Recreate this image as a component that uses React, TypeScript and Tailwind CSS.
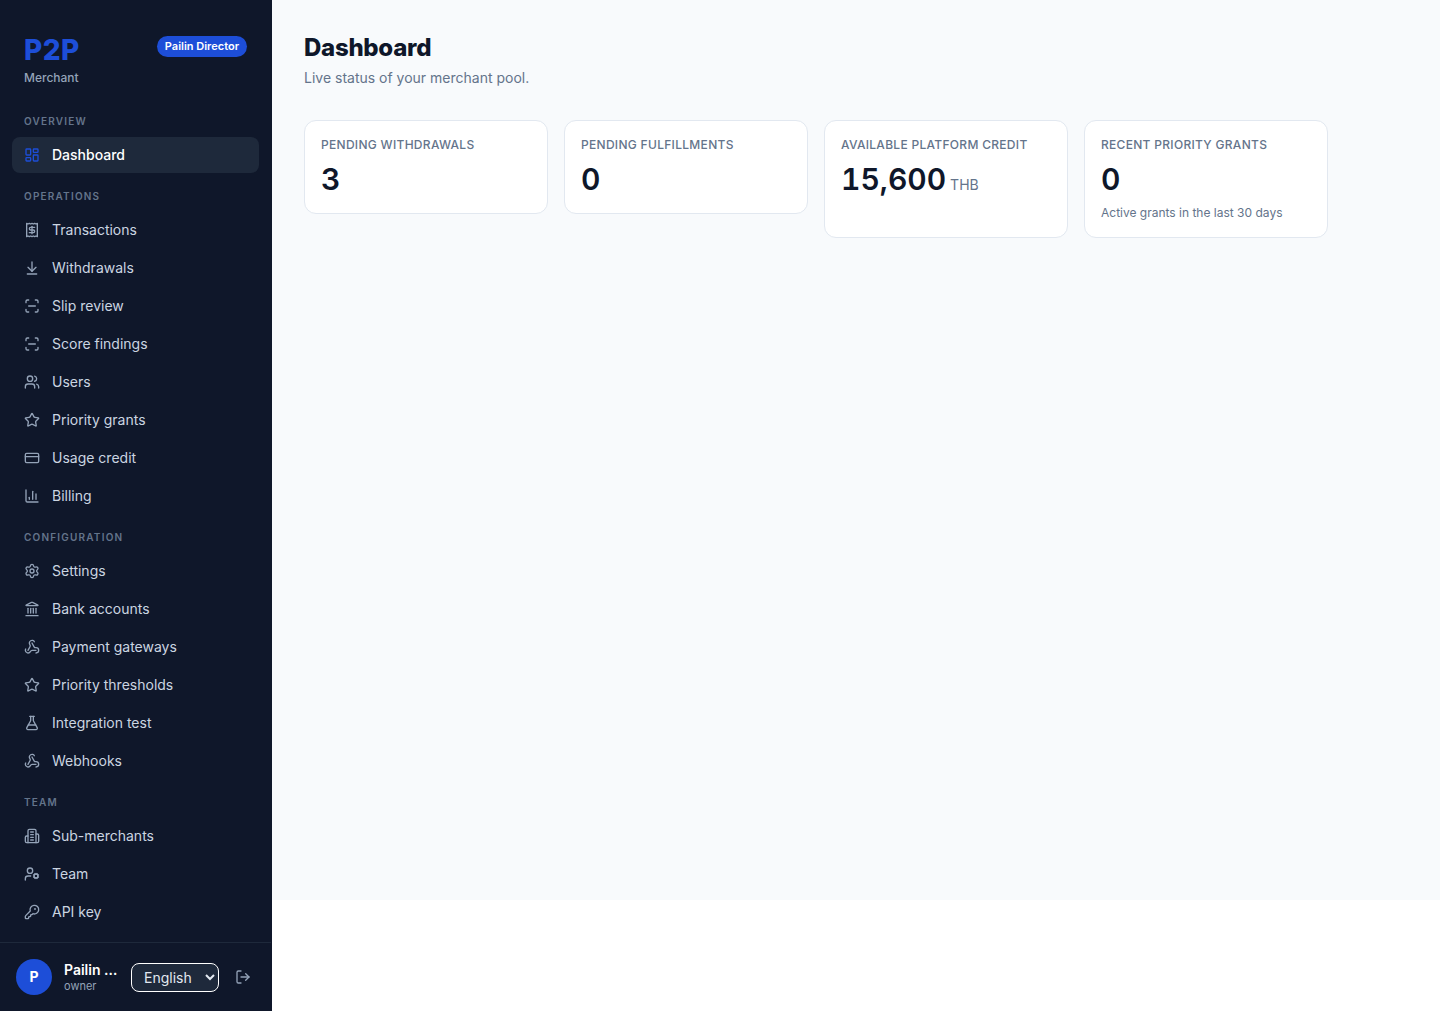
import type { ComponentType } from "react";
import {
  ArrowDownToLine,
  ChartColumn,
  CreditCard,
  FlaskConical,
  KeyRound,
  Landmark,
  LayoutDashboard,
  LogOut,
  ScanLine,
  Settings,
  Star,
  UserCog,
  Users,
  Webhook,
} from "lucide-react";

type IconProps = { size?: number; strokeWidth?: number; className?: string };
type NavItem = { label: string; icon: ComponentType<IconProps>; active?: boolean };

function ReceiptIcon({ size = 16, strokeWidth = 2, className }: IconProps) {
  return (
    <svg
      width={size}
      height={size}
      viewBox="0 0 24 24"
      fill="none"
      stroke="currentColor"
      strokeWidth={strokeWidth}
      strokeLinecap="round"
      strokeLinejoin="round"
      className={className}
    >
      <path d="M4 2v20l2-1 2 1 2-1 2 1 2-1 2 1 2-1 2 1V2l-2 1-2-1-2 1-2-1-2 1-2-1-2 1Z" />
      <path d="M16 8h-6a2 2 0 1 0 0 4h4a2 2 0 1 1 0 4H8" />
      <path d="M12 17.5v-11" />
    </svg>
  );
}

function BuildingIcon({ size = 16, strokeWidth = 2, className }: IconProps) {
  return (
    <svg
      width={size}
      height={size}
      viewBox="0 0 24 24"
      fill="none"
      stroke="currentColor"
      strokeWidth={strokeWidth}
      strokeLinecap="round"
      strokeLinejoin="round"
      className={className}
    >
      <path d="M6 22V4a2 2 0 0 1 2-2h8a2 2 0 0 1 2 2v18Z" />
      <path d="M6 12H4a2 2 0 0 0-2 2v6a2 2 0 0 0 2 2h2" />
      <path d="M18 9h2a2 2 0 0 1 2 2v9a2 2 0 0 1-2 2h-2" />
      <path d="M10 6h4M10 10h4M10 14h4M10 18h4" />
    </svg>
  );
}

const sections: { title: string; items: NavItem[] }[] = [
  {
    title: "Overview",
    items: [{ label: "Dashboard", icon: LayoutDashboard, active: true }],
  },
  {
    title: "Operations",
    items: [
      { label: "Transactions", icon: ReceiptIcon },
      { label: "Withdrawals", icon: ArrowDownToLine },
      { label: "Slip review", icon: ScanLine },
      { label: "Score findings", icon: ScanLine },
      { label: "Users", icon: Users },
      { label: "Priority grants", icon: Star },
      { label: "Usage credit", icon: CreditCard },
      { label: "Billing", icon: ChartColumn },
    ],
  },
  {
    title: "Configuration",
    items: [
      { label: "Settings", icon: Settings },
      { label: "Bank accounts", icon: Landmark },
      { label: "Payment gateways", icon: Webhook },
      { label: "Priority thresholds", icon: Star },
      { label: "Integration test", icon: FlaskConical },
      { label: "Webhooks", icon: Webhook },
    ],
  },
  {
    title: "Team",
    items: [
      { label: "Sub-merchants", icon: BuildingIcon },
      { label: "Team", icon: UserCog },
      { label: "API key", icon: KeyRound },
    ],
  },
];

const stats = [
  { label: "Pending withdrawals", value: "3" },
  { label: "Pending fulfillments", value: "0" },
  { label: "Available platform credit", value: "15,600", unit: "THB", hint: "" },
  { label: "Recent priority grants", value: "0", hint: "Active grants in the last 30 days" },
];

function Sidebar() {
  return (
    <aside className="flex h-[1011px] w-[272px] shrink-0 flex-col border-r border-[#0f172a] bg-[#0f172a]">
      <div className="flex items-start justify-between px-6 pt-8">
        <div>
          <div className="pt-px text-[28px] leading-[34px] font-extrabold tracking-[0.4px] text-[#1d4ed8]">P2P</div>
          <div className="mt-0.5 text-xs leading-[18px] font-medium text-[#94a3b8]">Merchant</div>
        </div>
        <span className="mt-1 rounded-full bg-[#1d4ed8] px-2 text-[11px] leading-[21px] font-semibold text-white">
          Pailin Director
        </span>
      </div>

      <nav className="flex flex-1 flex-col gap-4 px-3 pt-[27px]">
        {sections.map((s) => (
          <div key={s.title}>
            <h2 className="mb-2 px-3 text-[10px] leading-[15px] font-semibold tracking-[1.2px] text-[#64748b] uppercase">
              {s.title}
            </h2>
            <ul className="flex flex-col gap-0.5">
              {s.items.map(({ label, icon: Icon, active }) => (
                <li key={label}>
                  <a
                    className={`flex h-9 items-center gap-3 rounded-lg px-3 text-sm ${
                      active ? "bg-[#1e293b] font-medium text-white" : "font-normal text-[#cbd5e1]"
                    }`}
                  >
                    <Icon size={16} strokeWidth={2} className={active ? "text-[#1d4ed8]" : "text-[#94a3b8]"} />
                    {label}
                  </a>
                </li>
              ))}
            </ul>
          </div>
        ))}
      </nav>

      {/* Account */}
      <div className="flex items-center border-t border-[#1e293b] p-4">
        <div className="flex h-9 w-9 shrink-0 items-center justify-center rounded-full bg-[#1d4ed8] text-sm font-bold text-white">
          P
        </div>
        <div className="ml-3 w-[55px]">
          <div className="truncate text-sm leading-[18px] font-semibold text-white">Pailin Director</div>
          <div className="text-[11px] leading-[14px] text-[#94a3b8]">owner</div>
        </div>
        <select className="ml-3 h-[29px] w-[88px] rounded-lg border border-white bg-[#1e293b] px-2 font-['Inter',sans-serif] text-sm text-[#e2e8f0]">
          <option>English</option>
        </select>
        <button className="ml-4 text-[#94a3b8]">
          <LogOut size={16} strokeWidth={2} />
        </button>
      </div>
    </aside>
  );
}

export default function App() {
  return (
    <div className="flex h-[1011px] items-start overflow-hidden bg-white font-['Inter',sans-serif]">
      <Sidebar />
      <main className="h-[900px] flex-1 bg-[#f8fafc] p-8">
        <h1 className="text-2xl leading-8 font-extrabold tracking-[-0.28px] text-[#0f172a]">Dashboard</h1>
        <p className="mt-1 text-sm leading-5 text-[#64748b]">Live status of your merchant pool.</p>

        <div className="mt-8 grid max-w-[1024px] grid-cols-4 items-start gap-4">
          {stats.map((s) => (
            <div key={s.label} className="rounded-xl border border-[#e2e8f0] bg-white p-4">
              <div className="text-xs leading-4 font-medium tracking-wide text-[#64748b] uppercase">{s.label}</div>
              <div className="mt-2 flex h-9 items-baseline gap-1 text-3xl leading-9 font-semibold text-[#0f172a] tabular-nums">
                {s.value}
                {s.unit && <span className="text-sm font-normal text-[#64748b]">{s.unit}</span>}
              </div>
              {s.hint !== undefined && (
                <div className="mt-2 h-4 text-xs leading-4 text-[#64748b]">{s.hint}</div>
              )}
            </div>
          ))}
        </div>
      </main>
    </div>
  );
}
